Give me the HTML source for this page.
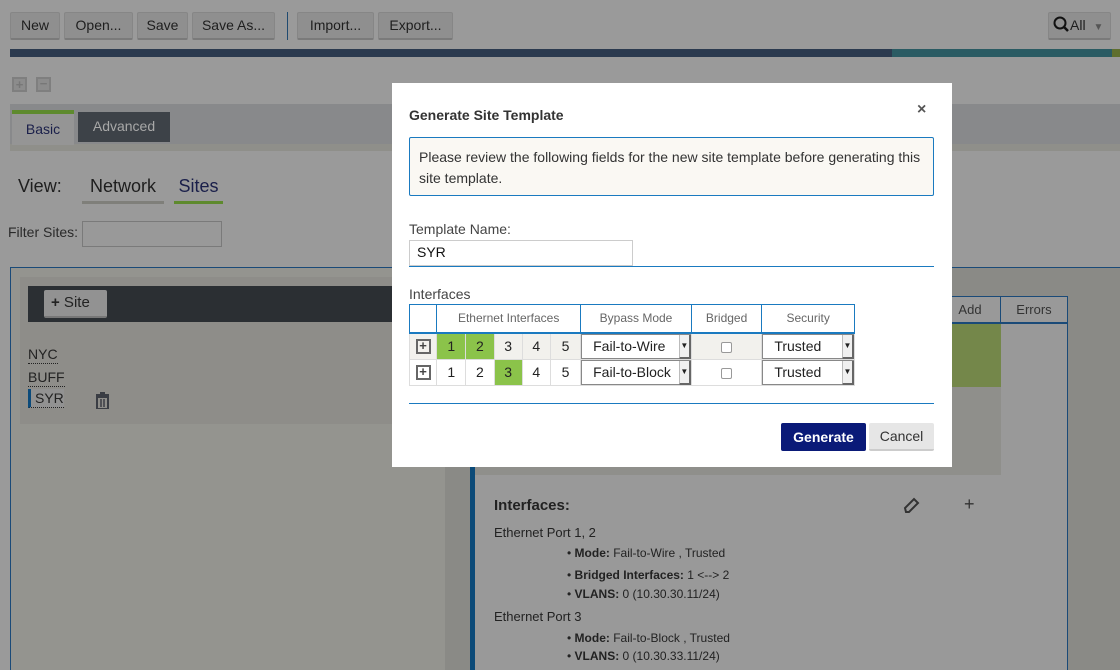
<!DOCTYPE html>
<html><head><style>
*{box-sizing:border-box;margin:0;padding:0}
body{width:1120px;height:670px;overflow:hidden;background:#9a9a9a;font-family:"Liberation Sans",sans-serif;position:relative;color:#222}
.a{position:absolute}
.btn{position:absolute;top:12px;height:28px;background:#8f8f8f;border:1px solid #868686;border-bottom:2px solid #7a7a7a;font-size:14px;color:#1e1e1e;text-align:center;line-height:25px;border-radius:2px}
td{border:1px solid #ddd;text-align:center;font-size:14px;color:#222}
.sel{background:#fff;border:1px solid #888;border-right:none;font-size:14px;text-align:left;padding-left:11px;line-height:22px;position:relative;height:25px}
.sel span{position:absolute;right:0;top:0;width:12px;height:24px;background:#f0f0f0;border-left:1px solid #bbb;border-right:2px solid #666;border-bottom:2px solid #666;font-size:8px;line-height:22px;text-align:center}
.cb{display:inline-block;width:11px;height:11px;border:1px solid #999;border-radius:2px;background:#fff;vertical-align:middle}
.pl{display:inline-block;width:15px;height:15px;border:2px solid #666;font-size:13px;line-height:10px;font-weight:bold;color:#444;text-align:center;vertical-align:middle}
.li{position:absolute;left:567px;font-size:12px;white-space:nowrap}
</style></head><body>
<div class="btn" style="left:10px;width:50px">New</div>
<div class="btn" style="left:64px;width:69px">Open...</div>
<div class="btn" style="left:137px;width:51px">Save</div>
<div class="btn" style="left:192px;width:83px">Save As...</div>
<div class="a" style="left:287px;top:12px;width:1px;height:28px;background:#1f4a70"></div>
<div class="btn" style="left:297px;width:77px">Import...</div>
<div class="btn" style="left:378px;width:75px">Export...</div>
<div class="btn" style="left:1048px;width:63px;text-align:left;padding-left:4px"><svg width="17" height="17" style="vertical-align:-3px"><circle cx="7" cy="7" r="5.5" fill="none" stroke="#111" stroke-width="2"/><path d="M11 11 L15 15" stroke="#111" stroke-width="2.5"/></svg>All <span style="font-size:10px;color:#555;margin-left:4px">▼</span></div>
<div class="a" style="left:10px;top:49px;width:882px;height:8px;background:#2b3a4f"></div>
<div class="a" style="left:892px;top:49px;width:220px;height:8px;background:#2a5b63"></div>
<div class="a" style="left:1112px;top:49px;width:8px;height:8px;background:#5f6f2e"></div>
<div class="a" style="left:12px;top:77px;width:15px;height:15px;border:2px solid #7f7f7f;background:#8c8c8c;color:#777;font-size:13px;line-height:11px;text-align:center;font-weight:bold">+</div>
<div class="a" style="left:36px;top:77px;width:15px;height:15px;border:2px solid #7f7f7f;background:#8c8c8c;color:#777;font-size:13px;line-height:10px;text-align:center;font-weight:bold">−</div>
<div class="a" style="left:10px;top:104px;width:1110px;height:47px;background:#88898b"></div>
<div class="a" style="left:10px;top:144px;width:1110px;height:7px;background:#8f8f8a"></div>
<div class="a" style="left:12px;top:110px;width:62px;height:35px;background:#959595;border-top:4px solid #5e8a2e;font-size:14px;color:#1a1f4a;text-align:center;line-height:30px">Basic</div>
<div class="a" style="left:78px;top:112px;width:92px;height:30px;background:#3d4248;font-size:14px;color:#a8a8a8;text-align:center;line-height:28px">Advanced</div>
<div class="a" style="left:18px;top:176px;font-size:18px;color:#1e1e1e">View:</div>
<div class="a" style="left:82px;top:176px;width:82px;height:28px;border-bottom:3px solid #7f7f7a;font-size:18px;text-align:center;color:#1e1e1e">Network</div>
<div class="a" style="left:174px;top:176px;width:49px;height:28px;border-bottom:3px solid #5e8a2e;font-size:18px;text-align:center;color:#1a1f4a">Sites</div>
<div class="a" style="left:8px;top:224px;font-size:14px;color:#2a2a2a">Filter Sites:</div>
<div class="a" style="left:82px;top:221px;width:140px;height:26px;border:1px solid #7a7a7a;background:#999"></div>
<div class="a" style="left:10px;top:267px;width:440px;height:403px;background:#94948f;border-left:1px solid #1a4a78;border-top:1px solid #1a4a78"></div>
<div class="a" style="left:20px;top:277px;width:425px;height:147px;background:#8e8d89"></div>
<div class="a" style="left:28px;top:286px;width:417px;height:36px;background:#2b2f33"></div>
<div class="a" style="left:44px;top:290px;width:63px;height:28px;background:#929292;border-bottom:2px solid #777;border-radius:2px;font-size:15px;color:#222;line-height:26px;padding-left:7px"><b>+</b> Site</div>
<div class="a" style="left:28px;top:345px;font-size:14px;border-bottom:1px dotted #222;line-height:18px">NYC</div>
<div class="a" style="left:28px;top:368px;font-size:14px;border-bottom:1px dotted #222;line-height:18px">BUFF</div>
<div class="a" style="left:28px;top:389px;font-size:14px;border-bottom:1px dotted #222;border-left:3px solid #0b4a7a;padding-left:4px;line-height:18px;background:#929292">SYR</div>
<svg class="a" style="left:95px;top:392px" width="15" height="17"><rect x="1" y="2" width="13" height="2" fill="#3a3d44"/><rect x="5" y="0" width="5" height="2" fill="#3a3d44"/><rect x="2" y="5" width="11" height="12" fill="none" stroke="#3a3d44" stroke-width="2"/><path d="M6 7v8M9 7v8" stroke="#3a3d44" stroke-width="1.5"/></svg>
<div class="a" style="left:445px;top:267px;width:675px;height:403px;background:#8a8a86;border-top:1px solid #1a4a78"></div>
<div class="a" style="left:470px;top:296px;width:598px;height:374px;background:#999;border-left:5px solid #0b4a78;border-right:1px solid #1a4a78"></div>
<div class="a" style="left:475px;top:323px;width:526px;height:152px;background:#8f8f8b"></div>
<div class="a" style="left:940px;top:323px;width:61px;height:64px;background:#74874a"></div>
<div class="a" style="left:940px;top:296px;width:128px;height:28px;border-top:1px solid #1a4a78;border-bottom:2px solid #1a4a78;font-size:13px;color:#333;line-height:26px"><span style="display:inline-block;width:61px;text-align:center;border-right:1px solid #1a4a78">Add</span><span style="display:inline-block;width:66px;text-align:center">Errors</span></div>
<div class="a" style="left:494px;top:497px;font-size:15px;font-weight:bold;color:#222">Interfaces:</div>
<svg class="a" style="left:903px;top:497px" width="17" height="17"><path d="M3 15 L2 11 L11 2 L15 6 L6 15 Z" fill="none" stroke="#333" stroke-width="2"/></svg>
<div class="a" style="left:964px;top:494px;font-size:18px;color:#333">+</div>
<div class="a" style="left:494px;top:525px;font-size:13px">Ethernet Port 1, 2</div>
<div class="li" style="top:546px">• <b>Mode:</b> Fail-to-Wire , Trusted</div>
<div class="li" style="top:568px">• <b>Bridged Interfaces:</b> 1 &lt;--&gt; 2</div>
<div class="li" style="top:587px">• <b>VLANS:</b> 0 (10.30.30.11/24)</div>
<div class="a" style="left:494px;top:609px;font-size:13px">Ethernet Port 3</div>
<div class="li" style="top:631px">• <b>Mode:</b> Fail-to-Block , Trusted</div>
<div class="li" style="top:649px">• <b>VLANS:</b> 0 (10.30.33.11/24)</div>

<div class="a" style="left:392px;top:83px;width:560px;height:384px;background:#fff">
<div class="a" style="left:17px;top:24px;font-size:14px;font-weight:bold;color:#333">Generate Site Template</div>
<div class="a" style="left:525px;top:18px;font-size:16px;font-weight:bold;color:#555">×</div>
<div class="a" style="left:17px;top:54px;width:525px;height:59px;background:#faf8f3;border:1px solid #1a7ac0;border-radius:2px;padding:9px 9px;font-size:14px;line-height:21px;color:#333">Please review the following fields for the new site template before generating this site template.</div>
<div class="a" style="left:17px;top:138px;font-size:14px;color:#444">Template Name:</div>
<div class="a" style="left:17px;top:157px;width:224px;height:26px;border:1px solid #ccc;font-size:14px;padding-left:7px;line-height:22px;color:#111">SYR</div>
<div class="a" style="left:17px;top:183px;width:525px;height:1px;background:#1a7ac0"></div>
<div class="a" style="left:17px;top:203px;font-size:14px;color:#444">Interfaces</div>
<table class="a" style="left:17px;top:221px;width:446px;border-collapse:collapse;border:1px solid #1a7ac0">
<tr style="height:28px;border-bottom:2px solid #1a7ac0"><td style="width:27px;border-color:#1a7ac0"></td><td colspan="5" style="font-size:12px;color:#666;border-color:#1a7ac0">Ethernet Interfaces</td><td style="width:110px;font-size:12px;color:#666;border-color:#1a7ac0">Bypass Mode</td><td style="width:70px;font-size:12px;color:#666;border-color:#1a7ac0">Bridged</td><td style="width:92px;font-size:12px;color:#666;border-color:#1a7ac0">Security</td></tr>
<tr style="height:26px"><td style="background:#f2f1ed"><span class="pl">+</span></td><td style="background:#8bc34a;width:29px">1</td><td style="background:#8bc34a;width:28px">2</td><td style="background:#f2f1ed;width:28px">3</td><td style="background:#f2f1ed;width:28px">4</td><td style="background:#f2f1ed;width:30px">5</td><td style="padding:0"><div class="sel">Fail-to-Wire<span>▼</span></div></td><td style="background:#f2f1ed"><span class="cb"></span></td><td style="padding:0"><div class="sel">Trusted<span>▼</span></div></td></tr>
<tr style="height:26px"><td><span class="pl">+</span></td><td>1</td><td>2</td><td style="background:#8bc34a">3</td><td>4</td><td>5</td><td style="padding:0"><div class="sel">Fail-to-Block<span>▼</span></div></td><td><span class="cb"></span></td><td style="padding:0"><div class="sel">Trusted<span>▼</span></div></td></tr>
</table>
<div class="a" style="left:17px;top:320px;width:525px;height:1px;background:#1a7ac0"></div>
<div class="a" style="left:389px;top:340px;width:85px;height:28px;background:#0a1a78;border-radius:2px;color:#fff;font-weight:bold;font-size:14px;text-align:center;line-height:28px">Generate</div>
<div class="a" style="left:477px;top:340px;width:65px;height:28px;background:#e6e6e6;border-bottom:2px solid #ccc;border-radius:2px;color:#333;font-size:14px;text-align:center;line-height:27px">Cancel</div>
</div>
</body></html>
